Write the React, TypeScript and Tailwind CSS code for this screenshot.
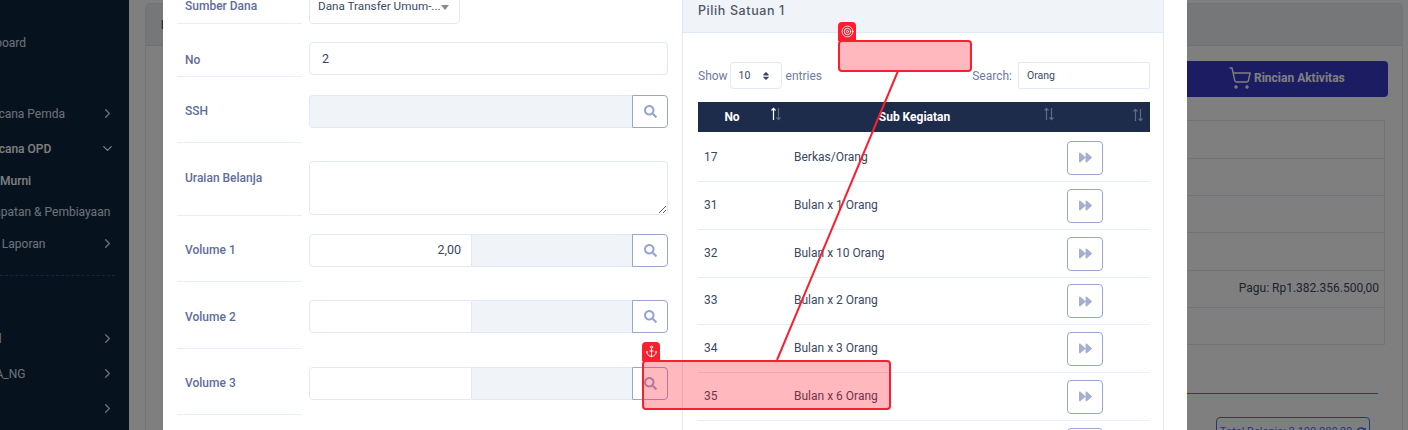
import { Anchor, ChevronDown, ChevronRight, ShoppingCart, Target } from "lucide-react"
import { FaForward, FaRedoAlt, FaSearch, FaSort } from "react-icons/fa"

const formRows = [
    { label: "No", height: "h-[53px]", labelTop: "pt-[27px]", type: "text", value: "2" },
    { label: "SSH", height: "h-[66px]", labelTop: "pt-[25px]", type: "search" },
    { label: "Uraian Belanja", height: "h-[73px]", labelTop: "pt-[26px]", type: "textarea" },
    { label: "Volume 1", height: "h-[66px]", labelTop: "pt-[25px]", type: "volume", value: "2,00" },
    { label: "Volume 2", height: "h-[67px]", labelTop: "pt-[26px]", type: "volume" },
    { label: "Volume 3", height: "h-[66px]", labelTop: "pt-[25px]", type: "volume" },
]

const satuan = [
    { no: "17", name: "Berkas/Orang", height: "h-[50px] pt-[2px]" },
    { no: "31", name: "Bulan x 1 Orang", height: "h-[48px]" },
    { no: "32", name: "Bulan x 10 Orang", height: "h-[48px]" },
    { no: "33", name: "Bulan x 2 Orang", height: "h-[47px]" },
    { no: "34", name: "Bulan x 3 Orang", height: "h-[48px]" },
    { no: "35", name: "Bulan x 6 Orang", height: "h-[48px]" },
    { no: "", name: "", height: "h-[48px]" },
]

function SortArrows ({ active = false }: { active?: boolean }) {
    return (
        <svg width="12" height="14" viewBox="0 0 12 14" fill="none" strokeWidth="1.2">
            <path d="M3.5 13V1.5M1.5 3.5l2-2.2 2 2.2" stroke={ active ? "#ffffff" : "#5d6a88" } />
            <path d="M8.5 1v11.5M6.5 10.5l2 2.2 2-2.2" stroke="#5d6a88" />
        </svg>
    )
}

function SearchButton () {
    return (
        <button className="w-9 h-full shrink-0 flex items-center justify-center bg-white border border-[#98a5cf] rounded-r-[4px] rounded-l-none">
            <FaSearch className="w-[13px] h-[13px] text-[#98a5cf]" />
        </button>
    )
}

function FormControl ({ type, value }: { type: string, value?: string }) {
    if (type === "text") {
        return (
            <input
                readOnly
                value={ value }
                className="w-full h-[33px] px-3 bg-white border border-[#e2e8f5] rounded-[4px] text-[12.5px] font-normal text-[#3b4863]"
            />
        )
    }
    if (type === "search") {
        return (
            <div className="flex h-[33px]">
                <div className="flex-1 bg-[#f0f3f8] border border-r-0 border-[#e2e8f5] rounded-l-[4px]" />
                <SearchButton />
            </div>
        )
    }
    if (type === "textarea") {
        return (
            <textarea
                readOnly
                className="block w-full h-[54px] bg-white border border-[#e2e8f5] rounded-[4px]"
            />
        )
    }
    return (
        <div className="flex h-[33px]">
            <input
                readOnly
                value={ value ?? "" }
                className="w-[163px] px-2.5 text-right bg-white border border-[#e2e8f5] rounded-l-[4px] text-[12.5px] font-normal text-[#3b4863]"
            />
            <div className="flex-1 bg-[#f0f3f8] border border-l-0 border-r-0 border-[#e2e8f5]" />
            <SearchButton />
        </div>
    )
}

function SidebarRow ({ text, offset, height, chevron, bright }: { text: string, offset: string, height: string, chevron?: "right" | "down", bright?: boolean }) {
    return (
        <div className={ `flex items-center justify-between pr-[14px] whitespace-nowrap ${height}` }>
            <span className={ `${offset} ${bright ? "text-white font-medium" : "text-[#dbe3ee]"}` }>{ text }</span>
            { chevron === "right" && <ChevronRight className="w-[15px] h-[15px] shrink-0 text-[#dbe3ee]" /> }
            { chevron === "down" && <ChevronDown className="w-[15px] h-[15px] shrink-0 text-white" /> }
        </div>
    )
}

export default function App () {
    return (
        <div className="relative w-[1408px] h-[430px] overflow-hidden flex bg-white font-['Roboto',sans-serif]">
            {/* SIDEBAR */ }
            <aside className="w-[129px] shrink-0 h-full overflow-hidden bg-[#0e243e] text-[12px]">
                <div className="mt-[25px] mb-[35px]">
                    <SidebarRow text="Dashboard" offset="ml-[-32px]" height="h-9" />
                </div>
                <SidebarRow text="Rencana Pemda" offset="ml-[-22px]" height="h-[35px]" chevron="right" />
                <SidebarRow text="Rencana OPD" offset="ml-[-22px]" height="h-[35px]" chevron="down" bright />
                <SidebarRow text="APBD Murni" offset="ml-[-34px]" height="h-[30px]" bright />
                <SidebarRow text="Pendapatan & Pembiayaan" offset="ml-[-33px]" height="h-[31px]" />
                <SidebarRow text="Data Laporan" offset="ml-[-26px]" height="h-[33px]" chevron="right" />
                <div className="mt-[15px] mr-[14px] border-b border-dashed border-[#2b4a70]" />
                <div className="h-[45px] pt-[18px] ml-[-25px] text-[#dbe3ee]">Data</div>
                <SidebarRow text="Modul" offset="ml-[-32px]" height="h-[35px]" chevron="right" />
                <SidebarRow text="SIPKA_NG" offset="ml-[-30px]" height="h-[35px]" chevron="right" />
                <SidebarRow text="Akun" offset="ml-[-30px]" height="h-[35px]" chevron="right" />
            </aside>

            {/* PAGE BEHIND THE MODAL */ }
            <main className="flex-1 pt-[3px] pl-[16px] pr-[5px]">
                <div className="h-[500px] bg-white border border-[#e4e6ec] rounded-[4px] text-[#3b4863] text-[12px]">
                    <div className="h-[42px] flex items-center pl-[15px] bg-[#eceef1] border-b border-[#dddfe6] font-medium">F</div>
                    <div className="flex flex-col items-end">
                        <button className="mt-[15px] mr-[14px] w-[400px] h-9 flex items-center justify-start pl-[240px] pb-[2px] gap-0.5 bg-[#3838c6] rounded-[4px] text-white font-bold whitespace-nowrap">
                            <ShoppingCart className="w-[24px] h-[24px] shrink-0" strokeWidth={ 1.4 } />
                            Rincian Aktivitas
                        </button>
                        <div className="mt-[23px] mr-[17px] w-[900px] border border-[#e6e9f2] border-b-0">
                            <div className="h-[38px] border-b border-[#e6e9f2]" />
                            <div className="h-[37px] border-b border-[#e6e9f2]" />
                            <div className="h-[37px] border-b border-[#e6e9f2]" />
                            <div className="h-[38px] border-b border-[#e6e9f2]" />
                            <div className="h-[37px] flex items-center justify-end pr-[5px] pb-[2px] border-b border-[#e6e9f2]">Pagu: Rp1.382.356.500,00</div>
                            <div className="h-[37px] border-b border-[#e6e9f2]" />
                        </div>
                        <div className="mt-[48px] mr-[24px] w-[800px] border-b border-[#3b76ff]" />
                        <button className="mt-[23px] mr-[32px] w-[154px] h-[30px] flex items-center justify-center gap-1 border border-[#3b76ff] rounded-[4px] text-[#3b76ff] text-[11px] whitespace-nowrap">
                            Total Belanja: 2.100.000,00
                            <FaRedoAlt className="w-[10px] h-[10px]" />
                        </button>
                    </div>
                </div>
            </main>

            {/* BACKDROP */ }
            <div className="absolute inset-0 bg-black/50" />

            {/* MODAL */ }
            <div className="absolute left-[163px] top-0 w-[1024px] h-full overflow-hidden bg-white flex gap-[14px] pl-[14px]">
                {/* Form */ }
                <div className="w-[491px] shrink-0 text-[12px] font-medium text-[#5f6d9b]">
                    <div className="flex gap-[7px] h-6">
                        <div className="w-[125px] pl-2 border-b border-[#e8edf6]">
                            <div className="mt-[-3px]">Sumber Dana</div>
                        </div>
                        <button className="mt-[-10px] w-[151px] h-[34px] flex items-center justify-between pl-2 pr-[11px] border border-[#e2e8f5] rounded-[4px] text-[11.7px] font-normal text-[#3b4863] whitespace-nowrap">
                            Dana Transfer Umum-...
                            <span className="border-x-[4px] border-x-transparent border-t-[5px] border-t-[#888888]" />
                        </button>
                    </div>
                    { formRows.map(row => (
                        <div key={ row.label } className={ `flex gap-[7px] ${row.height}` }>
                            <div className={ `w-[125px] pl-2 border-b border-[#e8edf6] ${row.labelTop}` }>{ row.label }</div>
                            <div className="flex-1 pt-[18px]">
                                <FormControl type={ row.type } value={ row.value } />
                            </div>
                        </div>
                    )) }
                </div>

                {/* Pilih Satuan */ }
                <div className="w-[482px] shrink-0 border-x border-[#e2e8f5] text-[#3b4863]">
                    <div className="mt-[-13px] h-[46px] flex items-center pl-[15px] pt-[3px] bg-[#f0f3f8] border-b border-[#e2e8f5] font-['Inter',sans-serif] text-[12.5px] font-medium tracking-[0.6px] text-[#4f5666]">
                        Pilih Satuan 1
                    </div>
                    <div className="ml-[15px] w-[452px]">
                        <div className="mt-[29px] h-[27px] flex items-center justify-between text-[12px] text-[#6f7ba3]">
                            <div className="flex items-center gap-1">
                                Show
                                <div className="ml-[-2px] w-[52px] h-[27px] flex items-center justify-between pl-2 pr-[10px] border border-[#e2e8f5] rounded-[4px] text-[10.5px] text-[#3b4863]">
                                    10
                                    <FaSort className="w-[10px] h-[10px]" />
                                </div>
                                entries
                            </div>
                            <div className="flex items-center gap-[6px]">
                                Search:
                                <input
                                    readOnly
                                    value="Orang"
                                    className="w-[132px] h-[27px] px-2 border border-[#e2e8f5] rounded-[2px] text-[10.5px] text-[#3b4863]"
                                />
                            </div>
                        </div>
                        <div className="mt-[13px] h-[30px] grid grid-cols-[90px_273px_89px] items-center bg-[#1e2c4b] text-[12px] font-bold text-white">
                            <div className="relative text-center pr-[22px]">
                                No
                                <span className="absolute left-[72px] top-[-1px]"><SortArrows active /></span>
                            </div>
                            <div className="relative text-center pr-[20px]">
                                Sub Kegiatan
                                <span className="absolute right-[6px] top-[-1px]"><SortArrows /></span>
                            </div>
                            <div className="relative h-[14px]">
                                <span className="absolute right-[6px] top-[-2px]"><SortArrows /></span>
                            </div>
                        </div>
                        { satuan.map((item, idx) => (
                            <div key={ idx } className={ `grid grid-cols-[90px_273px_89px] items-center border-b border-[#e8edf6] text-[12px] ${item.height}` }>
                                <div className="pl-1.5 pb-[2px]">{ item.no }</div>
                                <div className="pl-1.5 pb-[2px]">{ item.name }</div>
                                <div className="pl-1.5">
                                    <button className="w-9 h-[34px] flex items-center justify-center border border-[#98a5cf] rounded-[4px]">
                                        <FaForward className="w-[13px] h-[13px] text-[#a3afd3]" />
                                    </button>
                                </div>
                            </div>
                        )) }
                    </div>
                </div>
            </div>

            {/* ANNOTATIONS */ }
            <svg className="absolute inset-0 pointer-events-none" width="1408" height="430" fill="none">
                <path d="M898 71L777 360" stroke="#f8202f" strokeWidth="2" />
            </svg>
            <div className="absolute left-[838px] top-[40px] w-[134px] h-[32px] bg-[#ff0014]/[0.28] border-2 border-[#f8202f] rounded-[4px]" />
            <div className="absolute left-[838px] top-[22px] w-[18px] h-[19px] flex items-center justify-center bg-[#f8202f] rounded-t-[4px]">
                <Target className="w-[13px] h-[13px] text-white" strokeWidth={ 1.5 } />
            </div>
            <div className="absolute left-[642px] top-[360px] w-[249px] h-[50px] bg-[#ff0014]/[0.28] border-2 border-[#f8202f] rounded-[4px]" />
            <div className="absolute left-[642px] top-[342px] w-[18px] h-[19px] flex items-center justify-center bg-[#f8202f] rounded-t-[4px]">
                <Anchor className="w-[13px] h-[13px] text-white" strokeWidth={ 1.8 } />
            </div>
        </div>
    )
}
